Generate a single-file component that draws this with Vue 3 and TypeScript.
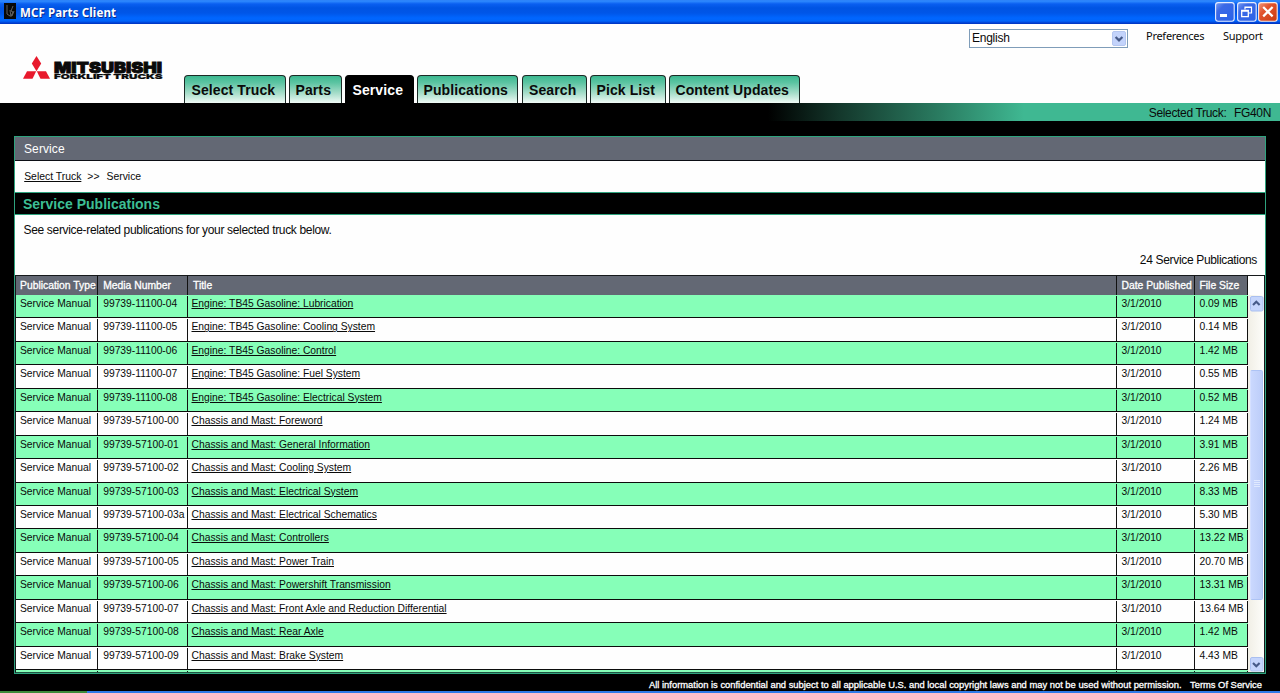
<script setup lang="ts">
interface Tab {
  label: string
  width: number
  gap: number
  pad: number
  active?: boolean
}

interface Publication {
  media: string
  title: string
  size: string
}

const tabs: Tab[] = [
  { label: 'Select Truck', width: 102, gap: 3, pad: 6.5 },
  { label: 'Parts', width: 53, gap: 3, pad: 5.5 },
  { label: 'Service', width: 69, gap: 3, pad: 6.5, active: true },
  { label: 'Publications', width: 101, gap: 4, pad: 5.5 },
  { label: 'Search', width: 65, gap: 3, pad: 6 },
  { label: 'Pick List', width: 76, gap: 3, pad: 5.5 },
  { label: 'Content Updates', width: 131, gap: 0, pad: 5.5 },
]

const publications: Publication[] = [
  { media: '99739-11100-04', title: 'Engine: TB45 Gasoline: Lubrication', size: '0.09 MB' },
  { media: '99739-11100-05', title: 'Engine: TB45 Gasoline: Cooling System', size: '0.14 MB' },
  { media: '99739-11100-06', title: 'Engine: TB45 Gasoline: Control', size: '1.42 MB' },
  { media: '99739-11100-07', title: 'Engine: TB45 Gasoline: Fuel System', size: '0.55 MB' },
  { media: '99739-11100-08', title: 'Engine: TB45 Gasoline: Electrical System', size: '0.52 MB' },
  { media: '99739-57100-00', title: 'Chassis and Mast: Foreword', size: '1.24 MB' },
  { media: '99739-57100-01', title: 'Chassis and Mast: General Information', size: '3.91 MB' },
  { media: '99739-57100-02', title: 'Chassis and Mast: Cooling System', size: '2.26 MB' },
  { media: '99739-57100-03', title: 'Chassis and Mast: Electrical System', size: '8.33 MB' },
  { media: '99739-57100-03a', title: 'Chassis and Mast: Electrical Schematics', size: '5.30 MB' },
  { media: '99739-57100-04', title: 'Chassis and Mast: Controllers', size: '13.22 MB' },
  { media: '99739-57100-05', title: 'Chassis and Mast: Power Train', size: '20.70 MB' },
  { media: '99739-57100-06', title: 'Chassis and Mast: Powershift Transmission', size: '13.31 MB' },
  { media: '99739-57100-07', title: 'Chassis and Mast: Front Axle and Reduction Differential', size: '13.64 MB' },
  { media: '99739-57100-08', title: 'Chassis and Mast: Rear Axle', size: '1.42 MB' },
  { media: '99739-57100-09', title: 'Chassis and Mast: Brake System', size: '4.43 MB' },
]
</script>

<template>
  <div class="window">
    <div class="titlebar">
      <svg class="app-icon" width="12" height="16" viewBox="0 0 12 16">
        <rect width="12" height="16" fill="#080808" />
        <path d="M3 2v9l3 2M6 7l1 7M9 3L7 8l2 1-2 4M10 8l-2 5" fill="none" stroke="#777" stroke-width=".8" />
      </svg>
      <span class="app-title">MCF Parts Client</span>
      <div class="win-buttons">
        <svg class="win-btn" width="20" height="20" viewBox="0 0 20 20">
          <defs>
            <linearGradient id="blueBtn" x1="0" y1="0" x2="1" y2="1">
              <stop offset="0" stop-color="#7d9ff2" />
              <stop offset=".3" stop-color="#3c69e6" />
              <stop offset="1" stop-color="#2a62e8" />
            </linearGradient>
            <linearGradient id="redBtn" x1="0" y1="0" x2="1" y2="1">
              <stop offset="0" stop-color="#f09a80" />
              <stop offset=".35" stop-color="#e2552f" />
              <stop offset="1" stop-color="#c93a10" />
            </linearGradient>
          </defs>
          <rect x=".6" y=".6" width="18.6" height="18.6" rx="2.5" fill="url(#blueBtn)" stroke="#e6edff" stroke-width="1.1" />
          <rect x="5" y="12" width="7" height="3" fill="#fff" />
        </svg>
        <svg class="win-btn second" width="20" height="20" viewBox="0 0 20 20">
          <rect x=".6" y=".6" width="18.6" height="18.6" rx="2.5" fill="url(#blueBtn)" stroke="#e6edff" stroke-width="1.1" />
          <path d="M8 7.5V5h6.500v6H12M8 5.500h6.500" fill="none" stroke="#fff" stroke-width="1.2" />
          <path d="M4.700 8.500h6.600v6.200H4.700zM4.700 9.200h6.600" fill="none" stroke="#fff" stroke-width="1.3" />
        </svg>
        <svg class="win-btn third" width="20" height="20" viewBox="0 0 20 20">
          <rect x=".6" y=".6" width="18.6" height="18.6" rx="2.5" fill="url(#redBtn)" stroke="#fbeae5" stroke-width="1.1" />
          <path d="M5.200 5l9.400 9.400M14.600 5l-9.400 9.400" stroke="#fff" stroke-width="2.200" />
        </svg>
      </div>
    </div>

    <header class="header">
      <svg class="logo" width="144" height="28" viewBox="0 0 144 28">
        <g fill="#e8192c">
          <path d="M13.500 0L18.200 7.600 13.500 15.300 8.800 7.600z" />
          <path d="M4 15.300H13.200L9.500 22.800H0z" />
          <path d="M13.800 15.300H23L27 22.800H17.500z" />
        </g>
        <text class="brand" x="31" y="17" textLength="108" lengthAdjust="spacingAndGlyphs">MITSUBISHI</text>
        <text class="brand-sub" x="31" y="23" textLength="108.500" lengthAdjust="spacingAndGlyphs">FORKLIFT TRUCKS</text>
      </svg>
      <nav class="tabs">
        <div
          v-for="tab in tabs"
          :key="tab.label"
          class="tab"
          :class="{ active: tab.active }"
          :style="{ width: tab.width + 'px', marginRight: tab.gap + 'px', paddingLeft: tab.pad + 'px' }"
        >{{ tab.label }}</div>
      </nav>
      <div class="tools">
        <div class="select">
          <span>English</span>
          <svg width="14" height="15" viewBox="0 0 14 15">
            <rect x=".5" y=".5" width="13" height="14" rx="1.500" fill="#c3d3fb" stroke="#b4c6f0" />
            <path d="M3.600 6L7 9.400 10.400 6" fill="none" stroke="#465a88" stroke-width="2.200" />
          </svg>
        </div>
        <span class="tool pref">Preferences</span>
        <span class="tool supp">Support</span>
      </div>
    </header>

    <div class="truck-strip"><span>Selected Truck:</span><span class="truck">FG40N</span></div>

    <main class="panel">
      <div class="panel-title">Service</div>
      <div class="crumbs"><a>Select Truck</a><span class="sep">&gt;&gt;</span><span>Service</span></div>
      <h1 class="section">Service Publications</h1>
      <div class="intro">
        <p>See service-related publications for your selected truck below.</p>
        <p class="count">24 Service Publications</p>
      </div>
      <div class="grid">
        <div class="table">
          <div class="cols head">
            <div>Publication Type</div>
            <div>Media Number</div>
            <div>Title</div>
            <div>Date Published</div>
            <div>File Size</div>
          </div>
          <div class="rows">
            <div v-for="pub in publications" :key="pub.media" class="cols row">
              <div>Service Manual</div>
              <div>{{ pub.media }}</div>
              <div><a>{{ pub.title }}</a></div>
              <div>3/1/2010</div>
              <div>{{ pub.size }}</div>
            </div>
            <div class="cols row"><div /><div /><div /><div /><div /></div>
          </div>
        </div>
        <div class="scroll">
          <div class="scroll-head" />
          <div class="track">
            <svg width="14" height="16" viewBox="0 0 14 16">
              <rect x=".5" y=".5" width="12.500" height="14.500" rx="1.500" fill="#c5d5fc" stroke="#a9bff0" />
              <path d="M3 9L6.300 5.700 9.600 9" fill="none" stroke="#465a88" stroke-width="2.100" />
            </svg>
            <div class="thumb"><i /><i /><i /><i /></div>
            <svg width="14" height="15" viewBox="0 0 14 15">
              <rect x=".5" y=".5" width="12.500" height="13.500" rx="1.500" fill="#c5d5fc" stroke="#a9bff0" />
              <path d="M3 5.900L6.300 9.200 9.600 5.900" fill="none" stroke="#465a88" stroke-width="2.100" />
            </svg>
          </div>
        </div>
      </div>
    </main>

    <footer class="footer">
      <span class="legal">All information is confidential and subject to all applicable U.S. and local copyright laws and may not be used without permission.</span>
      <span class="terms">Terms Of Service</span>
    </footer>
    <div class="taskbar"><div class="start" /></div>
  </div>
</template>

<style>
html,
body {
  margin: 0;
  overflow: hidden;
  background: #000;
}
</style>

<style scoped>
* {
  box-sizing: border-box;
}
.window {
  width: 1280px;
  height: 693px;
  overflow: hidden;
  display: flex;
  flex-direction: column;
  background: #000;
  color: #0a0a0a;
  font-family: "Liberation Sans", Arial, sans-serif;
  white-space: nowrap;
}
.window > * {
  flex: none;
}
.titlebar {
  height: 24px;
  display: flex;
  align-items: flex-start;
  padding-left: 4px;
  background: linear-gradient(#2a7df5 0, #2f8bff 1px, #0a5ff0 4px, #0054e3 8px, #0056e8 13px, #0066ff 18px, #0064fa 21px, #003dd0 23px, #0033bd 24px);
}
.app-icon {
  margin-top: 3px;
}
.app-title {
  margin: 4px 0 0 4px;
  color: #fff;
  font: bold 11.5px/17px "Noto Sans", sans-serif;
  letter-spacing: 0.13px;
  text-shadow: 1px 1px 0 #0a2a8c;
}
.win-buttons {
  display: flex;
  margin: 2px 2px 0 auto;
}
.second {
  margin-left: 2px;
}
.third {
  margin-left: 1px;
}
.header {
  height: 79px;
  background: #fefefe;
  display: flex;
}
.logo {
  margin: 32px 0 0 23px;
}
.brand {
  font: 900 15px "Inter", sans-serif;
  fill: #0a0a0a;
  stroke: #0a0a0a;
  stroke-width: 0.9px;
}
.brand-sub {
  font: 900 6.8px "Inter", sans-serif;
  fill: #0a0a0a;
  stroke: #0a0a0a;
  stroke-width: 0.2px;
}
.tabs {
  display: flex;
  align-items: flex-end;
  margin-left: 17px;
}
.tab {
  height: 28px;
  border: 1.5px solid #1c2a26;
  border-bottom: 0;
  border-radius: 4px 4px 0 0;
  background: linear-gradient(#3cb890, #5cc4a2 25%, #a9decb 65%, #f0faf6);
  font-weight: bold;
  font-size: 14px;
  letter-spacing: 0.1px;
  line-height: 28px;
}
.tab.active {
  background: #000;
  border-color: #000;
  color: #fff;
}
.tools {
  margin-left: auto;
  display: flex;
}
.select {
  width: 159px;
  height: 19px;
  margin: 5px 18px 0 0;
  border: 1px solid #7f9db9;
  background: #fff;
  display: flex;
  justify-content: space-between;
  padding: 1px 1px 1px 2px;
  font-size: 12px;
  letter-spacing: -0.25px;
  line-height: 15px;
}
.tool {
  margin-top: 3px;
  font: 11px/17px "Noto Sans", sans-serif;
  letter-spacing: -0.27px;
}
.pref {
  width: 77px;
}
.supp {
  width: 57px;
}
.truck-strip {
  height: 18px;
  padding-right: 9px;
  background: linear-gradient(90deg, #000 768px, #14382c 840px, #2a7c61 940px, #3fb892 1024px);
  display: flex;
  justify-content: flex-end;
  font-size: 12px;
  letter-spacing: -0.33px;
  line-height: 20px;
}
.truck {
  margin-left: 7.500px;
}
.panel {
  width: 1252px;
  height: 538px;
  margin: 15px 0 0 14px;
  border: 1px solid #2ea37e;
  background: #fefefe;
  display: flex;
  flex-direction: column;
}
.panel-title {
  height: 24px;
  padding-left: 9px;
  border-bottom: 1px solid #0b0d14;
  background: #636874;
  color: #fff;
  font-size: 12px;
  letter-spacing: 0.1px;
  line-height: 24px;
}
.crumbs {
  height: 31px;
  padding-left: 9.200px;
  font-size: 10.400px;
  line-height: 32px;
}
.sep {
  margin: 0 7px 0 6px;
}
.section {
  height: 23px;
  margin: 0;
  padding-left: 8px;
  border: solid #2ea37e;
  border-width: 1px 0;
  background: #000;
  color: #3dbe94;
  font-size: 14px;
  line-height: 22px;
}
.intro {
  height: 60px;
  padding: 7px 8px 0 8.500px;
  font-size: 12px;
  letter-spacing: -0.33px;
}
.intro p {
  margin: 0;
  line-height: 16px;
}
.intro .count {
  margin-top: 14px;
  text-align: right;
}
.grid {
  flex: 1;
  min-height: 0;
  display: flex;
  border: 1px solid #15181b;
  border-bottom-color: #1e5542;
}
.table {
  width: 1232px;
  display: flex;
  flex-direction: column;
  overflow: hidden;
}
.cols {
  display: grid;
  grid-template-columns: 82px 90px 929px 78px 53px;
}
.head {
  flex: none;
  height: 19px;
  background: #636874;
  color: #fff;
  font-size: 10.350px;
  line-height: 20px;
  -webkit-text-stroke: 0.3px #fff;
}
.cols > div {
  padding-left: 4.500px;
  border-right: 1px solid #111;
}
.cols > div:first-child {
  padding-left: 4px;
}
.cols > div:nth-child(2) {
  padding-left: 5.200px;
}
.head > div:nth-child(3) {
  padding-left: 5px;
}
.rows {
  flex: 1;
  min-height: 0;
  overflow: hidden;
}
.row {
  height: 23.450px;
  padding-top: 1px;
  border-bottom: 1px solid #0c0c0c;
  font-size: 10.300px;
  line-height: 15px;
}
.row:nth-child(odd) {
  background: #86ffb8;
}
.row > div {
  border-right-width: 1.500px;
}
.row > div:nth-child(3) {
  padding-left: 3.500px;
}
a {
  text-decoration: underline;
  text-underline-offset: 1px;
  text-decoration-thickness: 1px;
}
.scroll {
  flex: 1;
}
.scroll-head {
  height: 19px;
}
.track {
  height: 377px;
  padding: 1px 0 0 2px;
  background: linear-gradient(90deg, #f1efe6, #fdfdfa);
  display: flex;
  flex-direction: column;
}
.track svg {
  flex: none;
}
.thumb {
  width: 13px;
  height: 230px;
  margin: 58px 0 57px;
  padding-bottom: 4px;
  border: 1px solid #adc3f5;
  border-left-color: #d5e0ff;
  border-radius: 2px;
  background: linear-gradient(90deg, #cad8fe, #bccdf9);
  display: flex;
  flex-direction: column;
  align-items: center;
  justify-content: center;
  gap: 1px;
}
.thumb i {
  width: 6px;
  height: 1px;
  background: #dfe9ff;
}
.footer {
  height: 17px;
  display: flex;
  padding: 2px 0 0 649px;
  color: #fff;
  font-size: 9.400px;
  line-height: 17px;
  -webkit-text-stroke: 0.3px #fff;
}
.legal {
  width: 541px;
}
.taskbar {
  height: 2px;
  background: #2f7ae8;
}
.start {
  width: 87px;
  height: 2px;
  background: #3c8a3a;
}
</style>
